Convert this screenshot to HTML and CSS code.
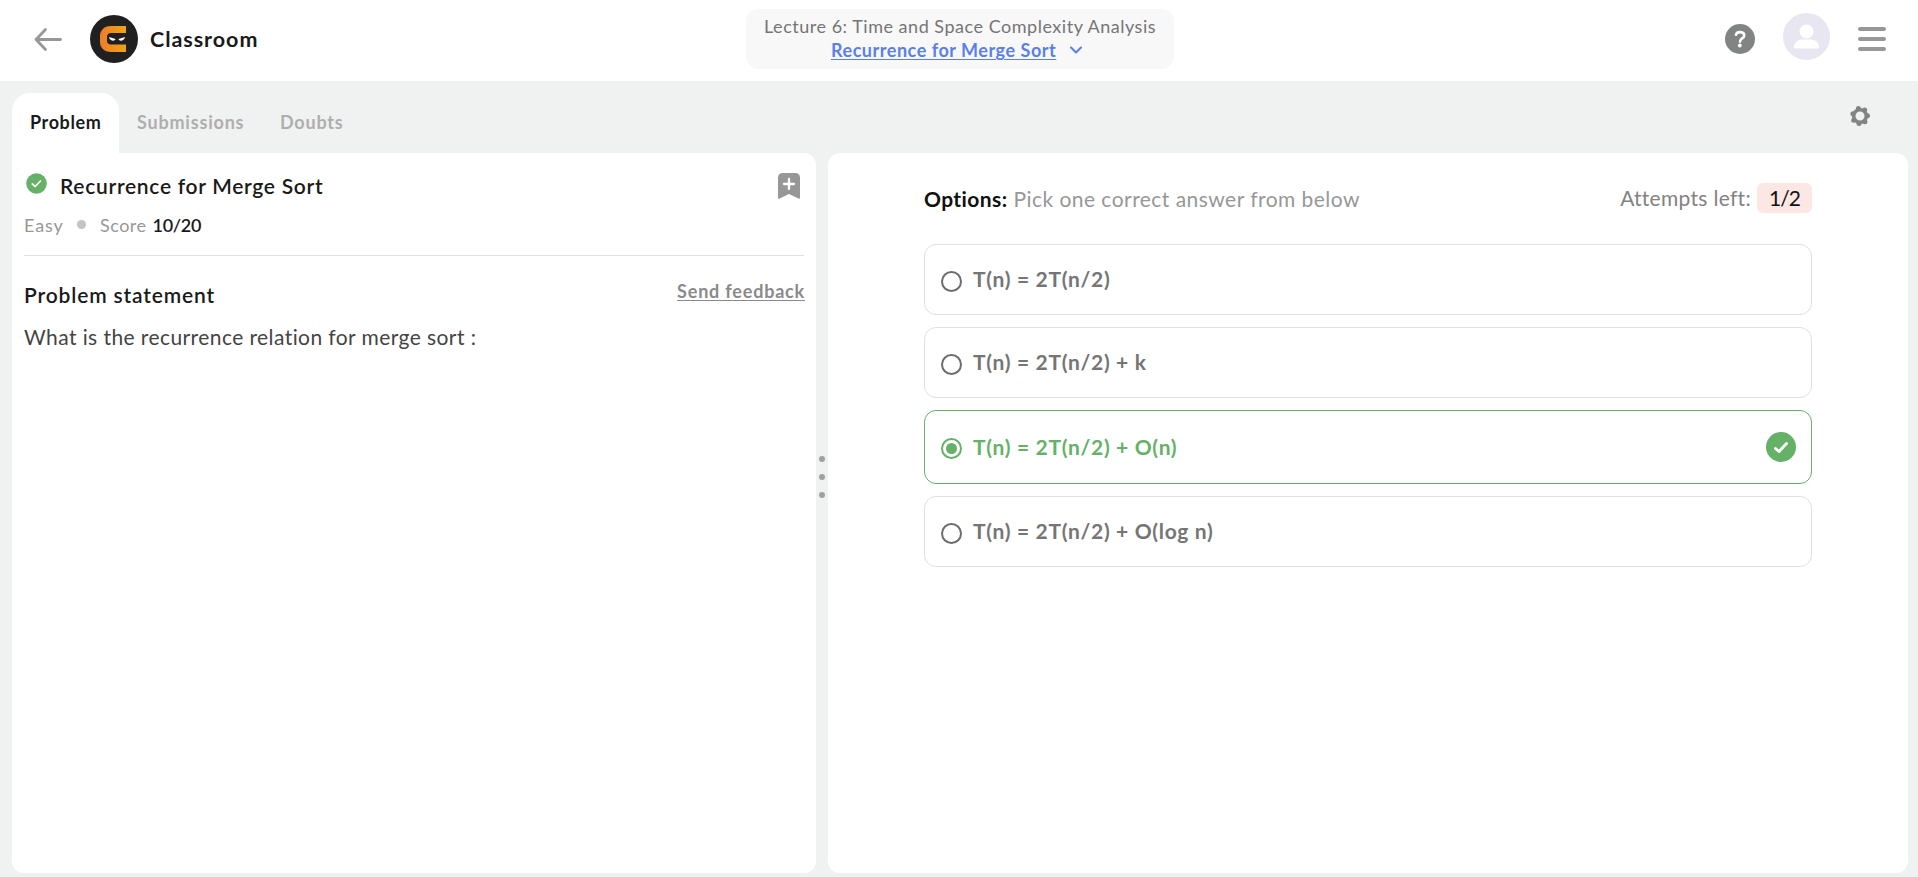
FILE: index.html
```html
<!DOCTYPE html>
<html lang="en">
<head>
<meta charset="utf-8">
<title>Recurrence for Merge Sort</title>
<link rel="stylesheet" href="styles.css">
</head>
<body>
<header class="topbar">
  <div class="brand">
    <svg class="back" width="30" height="26" viewBox="0 0 30 26" fill="none" stroke="#979797" stroke-width="2.800" stroke-linecap="round" stroke-linejoin="round"><path d="M27.500 13.500H3M12.500 3.500L3 13.500L12.500 23.500"/></svg>
    <svg class="logo" width="48" height="48" viewBox="0 0 48 48">
      <defs><linearGradient id="flame" x1="0" x2="1"><stop offset="0" stop-color="#ee7b2b"/><stop offset="1" stop-color="#eda516"/></linearGradient></defs>
      <circle cx="24" cy="24" r="24" fill="#202020"/>
      <path d="M36 11H21C13.500 11 10 16 10 21V27C10 32.500 14 37 21 37H36V29.500H21C18.500 29.500 17 28 17 26V22C17 19.500 18.500 18 21 18H36Z" fill="url(#flame)"/>
      <path d="M19 22L25.500 24C25 26.500 20 26.500 19 22ZM35 22L28.500 24C29 26.500 34 26.500 35 22Z" fill="#fff"/>
    </svg>
    <span class="brand-name">Classroom</span>
  </div>
  <div class="lesson">
    <div class="lesson-title">Lecture 6: Time and Space Complexity Analysis</div>
    <div class="lesson-row"><a class="lesson-link">Recurrence for Merge Sort</a>
      <svg width="14" height="10" viewBox="0 0 14 10" fill="none" stroke="#5a7fea" stroke-width="2.100" stroke-linecap="round" stroke-linejoin="round"><path d="M2 2.500L7 7.500L12 2.500"/></svg>
    </div>
  </div>
  <div class="actions">
    <svg class="help" width="30" height="30" viewBox="0 0 30 30"><circle cx="15" cy="15" r="15" fill="#828484"/><path d="M11 10.800C11.500 7 19.200 7.200 19.200 11.400C19.200 14.500 15 14.300 15 17.600" fill="none" stroke="#fff" stroke-width="2.600" stroke-linecap="round"/><circle cx="14.800" cy="21.500" r="1.900" fill="#fff"/></svg>
    <svg class="avatar" width="47" height="47" viewBox="0 0 47 47"><circle cx="23.500" cy="23.500" r="23.500" fill="#e7e6f1"/><circle cx="23.500" cy="18.500" r="7" fill="#fff"/><path d="M11 34.500C11 29 15 26.500 20 26.500H27C32 26.500 36 29 36 34.500Q36 35.500 35 35.500H12Q11 35.500 11 34.500Z" fill="#fff"/></svg>
    <svg class="menu" width="28" height="24" viewBox="0 0 28 24" fill="#979797"><rect width="28" height="4" rx="2"/><rect y="10" width="28" height="4" rx="2"/><rect y="20" width="28" height="4" rx="2"/></svg>
  </div>
</header>
<nav class="tabs">
  <div class="tab active">Problem</div>
  <div class="tab submissions">Submissions</div>
  <div class="tab">Doubts</div>
  <svg class="gear" width="22" height="22" viewBox="0 0 22 22"><circle cx="11" cy="11" r="6.300" fill="none" stroke="#828484" stroke-width="3.600"/><g fill="#828484"><circle cx="9.400" cy="3.600" r="2.500"/><circle cx="15.700" cy="5.100" r="2.500"/><circle cx="18.500" cy="10.800" r="2.500"/><circle cx="15.900" cy="16.700" r="2.500"/><circle cx="10" cy="18.500" r="2.500"/><circle cx="4.700" cy="15.200" r="2.500"/><circle cx="3.900" cy="8.700" r="2.500"/></g></svg>
</nav>
<main class="workspace">
  <section class="panel problem">
    <div class="problem-head">
      <svg class="solved" width="21" height="21" viewBox="0 0 21 21"><circle cx="10.500" cy="10.500" r="10.300" fill="#66b168"/><path d="M6.300 11L9.200 13.500L14.500 8" fill="none" stroke="#fff" stroke-width="1.700" stroke-linecap="round" stroke-linejoin="round"/></svg>
      <h1 class="problem-title">Recurrence for Merge Sort</h1>
      <svg class="bookmark" width="22" height="26" viewBox="0 0 22 26"><path d="M5 0H17Q22 0 22 5V24.500Q22 26.300 20.400 25.600L11 21L1.600 25.600Q0 26.300 0 24.500V5Q0 0 5 0Z" fill="#979797"/><path d="M11 6V16M6 11H16" stroke="#fff" stroke-width="2.300" stroke-linecap="round"/></svg>
    </div>
    <div class="meta"><span class="level">Easy</span><i class="dot"></i><span class="score">Score</span><b class="points">10/20</b></div>
    <div class="statement-head">
      <h2 class="statement-title">Problem statement</h2>
      <a class="feedback">Send feedback</a>
    </div>
    <p class="statement">What is the recurrence relation for merge sort :</p>
  </section>
  <div class="splitter"><i></i><i></i><i></i></div>
  <section class="panel answers">
    <div class="answers-head">
      <div><b class="options-label">Options:</b><span class="hint">Pick one correct answer from below</span></div>
      <div class="attempts"><span class="attempts-label">Attempts left:</span><span class="badge">1/2</span></div>
    </div>
    <div class="options">
      <div class="option"><i class="radio"></i><span>T(n) = 2T(n/2)</span></div>
      <div class="option"><i class="radio"></i><span>T(n) = 2T(n/2) + k</span></div>
      <div class="option selected"><i class="radio"></i><span>T(n) = 2T(n/2) + O(n)</span>
        <svg class="correct" width="30" height="30" viewBox="0 0 30 30"><circle cx="15" cy="15" r="15" fill="#66b168"/><path d="M9.500 16.500L13 19.500L20.500 11.500" fill="none" stroke="#fff" stroke-width="2.900" stroke-linecap="round" stroke-linejoin="round"/></svg>
      </div>
      <div class="option"><i class="radio"></i><span>T(n) = 2T(n/2) + O(log n)</span></div>
    </div>
  </section>
</main>
</body>
</html>
```
FILE: styles.css
```css
* { box-sizing: border-box; margin: 0; }
body {
  display: flex;
  flex-direction: column;
  height: 877px;
  overflow: hidden;
  background: #f0f2f1;
  font-family: Lato, "Open Sans", sans-serif;
  color: #1a1a1a;
  white-space: nowrap;
}
svg { display: block; flex: none; }

.topbar {
  display: grid;
  grid-template-columns: 746px 428px 1fr;
  height: 81px;
  background: #fff;
}
.brand { display: flex; padding: 15px 0 0 33px; }
.back { margin-top: 11px; }
.logo { margin-left: 27px; }
.brand-name {
  margin-left: 12px;
  font-size: 21.5px;
  font-weight: 700;
  line-height: 48px;
  letter-spacing: 0.95px;
}
.lesson {
  height: 60px;
  margin-top: 9px;
  padding-top: 5px;
  border-radius: 12px;
  background: #f8f8f8;
  font-size: 18px;
  line-height: 24px;
}
.lesson-title { padding-left: 18px; color: #757575; letter-spacing: 0.52px; }
.lesson-row { display: flex; align-items: center; gap: 13px; padding-left: 85px; color: #5a7fea; }
.lesson-link {
  font-weight: 700;
  letter-spacing: 0.53px;
  text-decoration: underline;
  text-decoration-thickness: 1px;
  text-underline-offset: 2px;
}
.actions { display: flex; padding-left: 551px; }
.help { margin-top: 24px; }
.avatar { margin: 13px 0 0 28px; }
.menu { margin: 27px 0 0 28px; }

.tabs {
  display: flex;
  flex: none;
  height: 60px;
  margin-top: 12px;
  padding: 0 47px 0 12px;
  font-size: 18px;
  font-weight: 700;
  line-height: 58px;
  letter-spacing: 0.8px;
  color: #aeaeae;
}
.tab { padding-left: 18px; }
.active {
  width: 107px;
  border-radius: 18px 18px 0 0;
  background: #fff;
  color: #1a1a1a;
  letter-spacing: 0.6px;
}
.submissions { width: 143px; }
.gear { margin: 12px 0 0 auto; }

.workspace { display: flex; height: 720px; padding: 0 10px 0 12px; }
.panel { background: #fff; border-radius: 12px; }
.problem { width: 804px; padding: 0 12px; border-top-left-radius: 0; }
.problem-head { display: flex; height: 54px; padding: 20px 4px 0 2px; }
.problem-title {
  margin-left: 13px;
  font-size: 21px;
  font-weight: 600;
  line-height: 25px;
  letter-spacing: 0.7px;
}
.bookmark { margin-left: auto; }
.meta {
  display: flex;
  align-items: center;
  height: 49px;
  padding-bottom: 13px;
  border-bottom: 1px solid #e0e0e0;
  font-size: 18px;
  color: #979797;
  letter-spacing: 0.5px;
}
.level { width: 53px; letter-spacing: 0.9px; }
.dot { width: 9px; height: 9px; border-radius: 50%; background: #c4c4c4; }
.score { margin-left: 14px; }
.points { margin-left: 6px; font-weight: 600; color: #1a1a1a; letter-spacing: -0.3px; }
.statement-head { display: flex; justify-content: space-between; padding-top: 24px; }
.statement-title { font-size: 21px; font-weight: 600; line-height: 30px; letter-spacing: 0.85px; }
.feedback {
  margin-right: -1px;
  font-size: 18px;
  font-weight: 700;
  line-height: 22px;
  letter-spacing: 0.8px;
  color: #8a8a8a;
  text-decoration: underline;
  text-decoration-thickness: 1px;
  text-underline-offset: 2px;
}
.statement { margin-top: 12px; font-size: 21px; font-weight: 400; line-height: 30px; letter-spacing: 0.42px; color: #444; }

.splitter { display: flex; flex-direction: column; align-items: center; gap: 12px; width: 12px; padding-top: 303px; }
.splitter i { width: 6px; height: 6px; border-radius: 50%; background: #a0a0a0; }

.answers { width: 1080px; padding: 30px 96px 0; }
.answers-head { display: flex; justify-content: space-between; height: 61px; font-size: 21px; line-height: 32px; }
.options-label { color: #111; letter-spacing: 0.4px; }
.hint { margin-left: 6px; color: #979797; letter-spacing: 0.46px; }
.attempts { display: flex; height: 30px; line-height: 30px; color: #828282; }
.attempts-label { letter-spacing: 0.3px; }
.badge { width: 55px; margin-left: 6px; border-radius: 6px; background: #fde7e5; color: #111; text-align: center; letter-spacing: -1px; }
.options { display: flex; flex-direction: column; gap: 12px; }
.option {
  display: flex;
  align-items: center;
  height: 71px;
  padding: 0 15px 0 16px;
  border: 1px solid #e0e0e0;
  border-radius: 12px;
  font-size: 21px;
  font-weight: 700;
  line-height: 30px;
  letter-spacing: 0.67px;
  color: #757575;
}
.option span { margin: -1px 0 0 11px; }
.radio { width: 21px; height: 21px; margin-top: 3px; border: 2px solid #6c6c6c; border-radius: 50%; }
.selected { height: 74px; border-color: #66b168; color: #66b168; }
.selected span { margin-top: 0; }
.selected .radio { margin-top: 2px; padding: 3px; border-color: #66b168; background: #66b168 content-box; }
.correct { margin-left: auto; }
```
